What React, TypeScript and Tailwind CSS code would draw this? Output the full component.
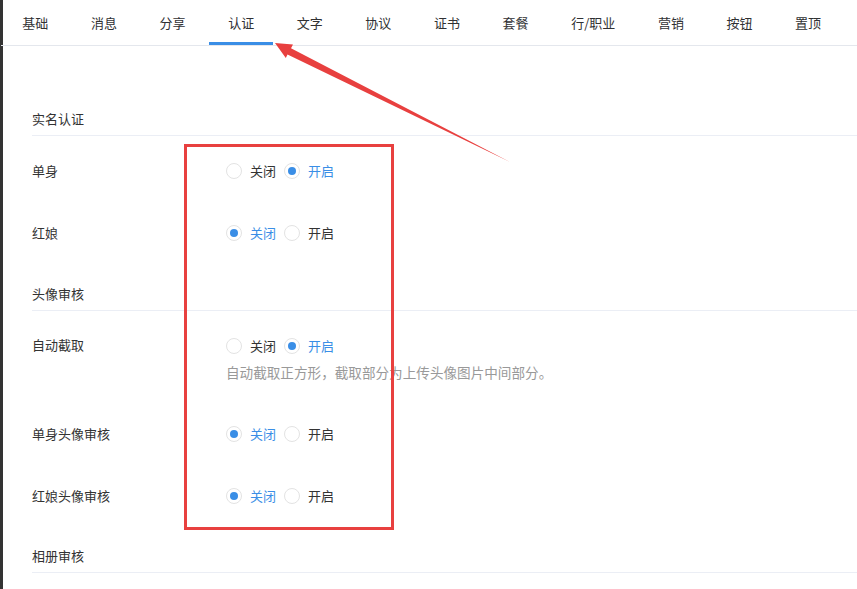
import React from "react";

const tabs = ["基础", "消息", "分享", "认证", "文字", "协议", "证书", "套餐", "行/职业", "营销", "按钮", "置顶"];

function Radio({ checked, label }: { checked?: boolean; label: string }) {
  return (
    <label className="flex items-center gap-2 cursor-pointer">
      <span className="w-4 h-4 rounded-full border border-[#e3e3e3] bg-white flex items-center justify-center">
        {checked && <span className="w-2 h-2 rounded-full bg-[#3a8ee6]" />}
      </span>
      <span className={checked ? "text-[#3a8ee6]" : "text-[#333]"}>{label}</span>
    </label>
  );
}

function Switch({ on }: { on: boolean }) {
  return (
    <div className="flex items-center gap-2">
      <Radio checked={!on} label="关闭" />
      <Radio checked={on} label="开启" />
    </div>
  );
}

function SectionTitle({ title, className = "" }: { title: string; className?: string }) {
  return (
    <div className={"h-[30px] border-b border-[#ebeef5] text-[#333] leading-[26px] " + className}>{title}</div>
  );
}

function Row({ label, on }: { label: string; on: boolean }) {
  return (
    <div className="h-[62px] flex items-center">
      <div className="w-[194px] text-[#333]">{label}</div>
      <Switch on={on} />
    </div>
  );
}

export default function App() {
  return (
    <div
      className="relative w-full h-[589px] overflow-hidden bg-white flex text-[13px]"
      style={{ fontFamily: '"Noto Sans CJK SC", "Noto Sans", sans-serif' }}
    >
      {/* dark edge of the parent window */}
      <div className="w-[3px] shrink-0 bg-[#333]" />

      <div className="flex-1 min-w-0">
        {/* Tabs */}
        <div className="h-[46px] border-b border-[#e4e7ed] flex -ml-[2px]">
          {tabs.map((t) => (
            <div key={t} className="relative px-[21.3px] leading-[45px] whitespace-nowrap text-[#303133]">
              {t}
              {t === "认证" && <span className="absolute left-[2px] right-[2px] bottom-0 h-[3px] bg-[#3a8ee6]" />}
            </div>
          ))}
        </div>

        <div className="pl-[29px]">
          <SectionTitle title="实名认证" className="mt-[60px]" />
          <div className="mt-[4px]">
            <Row label="单身" on={true} />
            <Row label="红娘" on={false} />
          </div>

          <SectionTitle title="头像审核" className="mt-[17px]" />
          <div className="mt-[25px] flex">
            <div className="w-[194px] text-[#333] leading-[20px] -mt-[1px]">自动截取</div>
            <div>
              <div className="h-[20px] flex items-center">
                <Switch on={true} />
              </div>
              <div className="mt-[6px] leading-[20px] text-[13.6px] text-[#999]">
                自动截取正方形，截取部分为上传头像图片中间部分。
              </div>
            </div>
          </div>
          <div className="mt-[21px]">
            <Row label="单身头像审核" on={false} />
            <Row label="红娘头像审核" on={false} />
          </div>

          <SectionTitle title="相册审核" className="mt-[16px]" />
        </div>
      </div>

      {/* annotation: red box */}
      <div className="absolute left-[184px] top-[144px] w-[210px] h-[386px] border-[3px] border-[#e8403f] pointer-events-none" />

      {/* annotation: arrow */}
      <svg className="absolute left-0 top-0 pointer-events-none" width="857" height="589">
        <polygon points="275,43 293,44.5 291,48.3 512,163 287.5,54.5 285.8,58" fill="#e8403f" />
      </svg>
    </div>
  );
}
